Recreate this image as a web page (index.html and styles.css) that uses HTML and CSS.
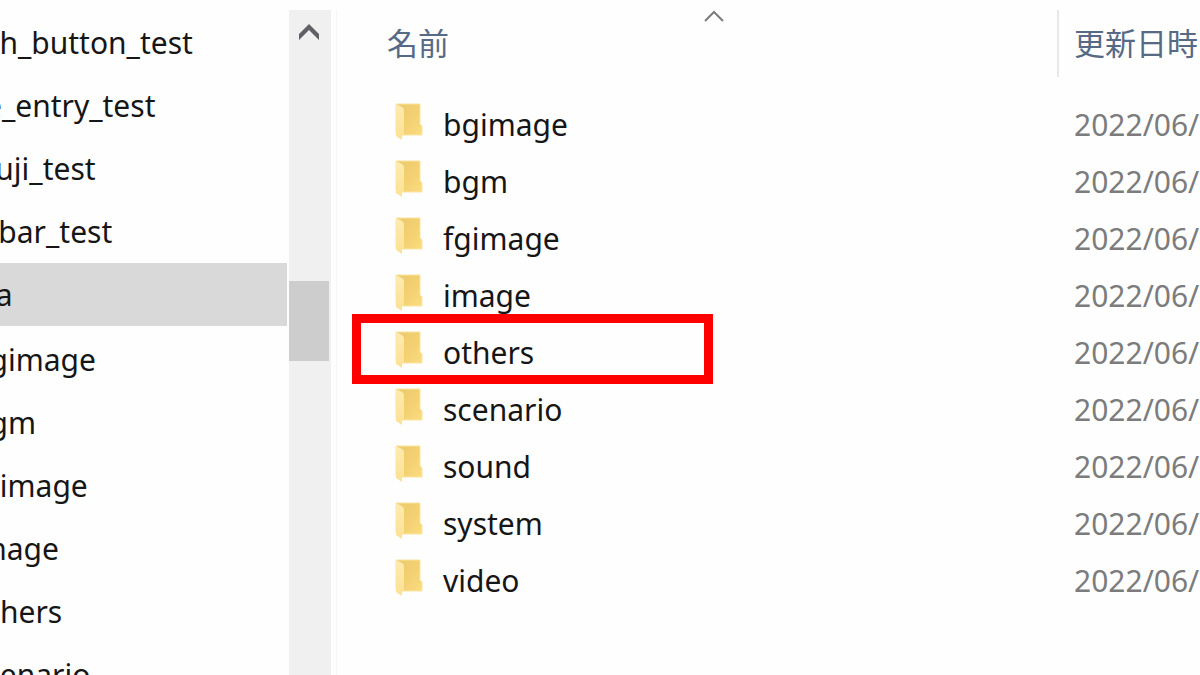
FILE: index.html
```html
<!DOCTYPE html>
<html lang="ja">
<head>
  <meta charset="UTF-8">
  <meta name="viewport" content="width=device-width, initial-scale=1.0">
  <title>data</title>
  <link rel="stylesheet" href="styles.css">
</head>
<body>
  <svg width="0" height="0" class="defs" aria-hidden="true">
    <defs>
      <linearGradient id="back" x1="0" y1="0" x2="1" y2="1">
        <stop offset="0" stop-color="#ecca6c"/>
        <stop offset="0.6" stop-color="#f4d274"/>
        <stop offset="1" stop-color="#fadc80"/>
      </linearGradient>
      <linearGradient id="front" x1="0" y1="0" x2="0" y2="1">
        <stop offset="0" stop-color="#ffebb0"/>
        <stop offset="1" stop-color="#fde193"/>
      </linearGradient>
    </defs>
    <symbol id="folder" viewBox="0 0 28 38">
      <path d="M1 1h24v20l2 2v9H7L1 30z" fill="url(#back)" stroke="#fbe4a0" stroke-width="1"/>
      <path d="M1 1l6 3q2 1 2 4v23l-2 1v5l-6-4z" fill="url(#front)"/>
    </symbol>
  </svg>

  <div class="explorer">
    <nav class="tree">
      <ul>
        <li><a href="#">ch_button_test</a></li>
        <li><a href="#">e_entry_test</a></li>
        <li><a href="#">fuji_test</a></li>
        <li><a href="#">_bar_test</a></li>
        <li class="selected"><a href="#">ta</a></li>
      </ul>
      <ul class="children">
        <li><a href="#">bgimage</a></li>
        <li><a href="#">bgm</a></li>
        <li><a href="#">fgimage</a></li>
        <li><a href="#">image</a></li>
        <li><a href="#">others</a></li>
        <li><a href="#">scenario</a></li>
      </ul>
    </nav>

    <div class="scrollbar">
      <button class="scroll-up" aria-label="Scroll up">
        <svg width="20" height="16" viewBox="0 0 20 16"><path d="M0 10L10 0l10 10v6L10 6 0 16z" fill="#606066"/></svg>
      </button>
      <div class="thumb"></div>
    </div>

    <main class="files">
      <table>
        <thead>
          <tr>
            <th class="name">
              <div class="head">
                名前
                <svg class="sort" width="20" height="12" viewBox="0 0 20 12"><path d="M1 11l9-9 9 9" fill="none" stroke="#7c7c7c" stroke-width="2"/></svg>
              </div>
            </th>
            <th class="date"><div class="head">更新日時</div></th>
          </tr>
        </thead>
        <tbody>
          <tr>
            <td><a class="file" href="#"><svg class="icon"><use href="#folder"/></svg>bgimage</a></td>
            <td class="date">2022/06/</td>
          </tr>
          <tr>
            <td><a class="file" href="#"><svg class="icon"><use href="#folder"/></svg>bgm</a></td>
            <td class="date">2022/06/</td>
          </tr>
          <tr>
            <td><a class="file" href="#"><svg class="icon"><use href="#folder"/></svg>fgimage</a></td>
            <td class="date">2022/06/</td>
          </tr>
          <tr>
            <td><a class="file" href="#"><svg class="icon"><use href="#folder"/></svg>image</a></td>
            <td class="date">2022/06/</td>
          </tr>
          <tr>
            <td><a class="file marked" href="#"><svg class="icon"><use href="#folder"/></svg>others</a></td>
            <td class="date">2022/06/</td>
          </tr>
          <tr>
            <td><a class="file" href="#"><svg class="icon"><use href="#folder"/></svg>scenario</a></td>
            <td class="date">2022/06/</td>
          </tr>
          <tr>
            <td><a class="file" href="#"><svg class="icon"><use href="#folder"/></svg>sound</a></td>
            <td class="date">2022/06/</td>
          </tr>
          <tr>
            <td><a class="file" href="#"><svg class="icon"><use href="#folder"/></svg>system</a></td>
            <td class="date">2022/06/</td>
          </tr>
          <tr>
            <td><a class="file" href="#"><svg class="icon"><use href="#folder"/></svg>video</a></td>
            <td class="date">2022/06/</td>
          </tr>
        </tbody>
      </table>
    </main>
  </div>
</body>
</html>
```
FILE: styles.css
```css
*,
*::after {
  margin: 0;
  padding: 0;
  box-sizing: border-box;
}

body {
  font-family: "Noto Sans", "Noto Sans CJK JP", sans-serif;
  font-size: 30px;
  color: #161616;
  background: #fefefe;
  overflow: hidden;
}

a {
  color: inherit;
  text-decoration: none;
}

ul {
  list-style: none;
}

.defs {
  position: absolute;
}

.explorer {
  display: flex;
  height: 100vh;
  padding-top: 10px;
}

/* Folder tree, scrolled to the right */
.tree {
  width: 287px;
  flex-shrink: 0;
  padding-top: 1px;
  overflow: hidden;
}

.tree li {
  line-height: 63px;
  white-space: nowrap;
}

.tree a {
  display: block;
  margin-left: -15px;
}

.tree .children a {
  margin-left: -29px;
}

.tree .selected {
  margin-bottom: 2px;
  background: #d9d9d9;
}

/* Scrollbar */
.scrollbar {
  width: 42px;
  flex-shrink: 0;
  margin-left: 2px;
  background: #f0f0f0;
}

.scroll-up {
  display: flex;
  justify-content: center;
  align-items: center;
  width: 40px;
  height: 44px;
  border: none;
  background: none;
}

.thumb {
  width: 40px;
  height: 80px;
  margin-top: 227px;
  background: #cdcdcd;
}

/* File list */
.files {
  flex: 1;
  min-width: 0;
  margin-left: 5px;
  padding-left: 34px;
  border-left: 1px solid #f3f7f8;
}

table {
  width: 100%;
  table-layout: fixed;
  border-collapse: collapse;
}

th {
  height: 86px;
  vertical-align: top;
  text-align: left;
  font-size: 31px;
  font-weight: 400;
  color: #566a86;
}

.head {
  position: relative;
  line-height: 67px;
  height: 67px;
  padding-left: 16px;
  white-space: nowrap;
}

.date {
  width: 143px;
  overflow: hidden;
}

.date .head {
  padding-left: 15px;
  border-left: 2px solid #e8e8e8;
}

.sort {
  position: absolute;
  top: 0;
  left: 50%;
  transform: translateX(-50%);
}

td {
  height: 57px;
  line-height: 57px;
}

td.date {
  padding-left: 17px;
  color: #7c7c7c;
  white-space: nowrap;
}

.file {
  display: flex;
  position: relative;
  padding-left: 24px;
  gap: 20px;
}

.icon {
  width: 28px;
  height: 38px;
  margin-top: 7px;
}

/* Highlight frame around a folder */
.marked::after {
  content: "";
  position: absolute;
  top: -10px;
  left: -19px;
  width: 361px;
  height: 70px;
  border: 9px solid #ff0000;
}
```
